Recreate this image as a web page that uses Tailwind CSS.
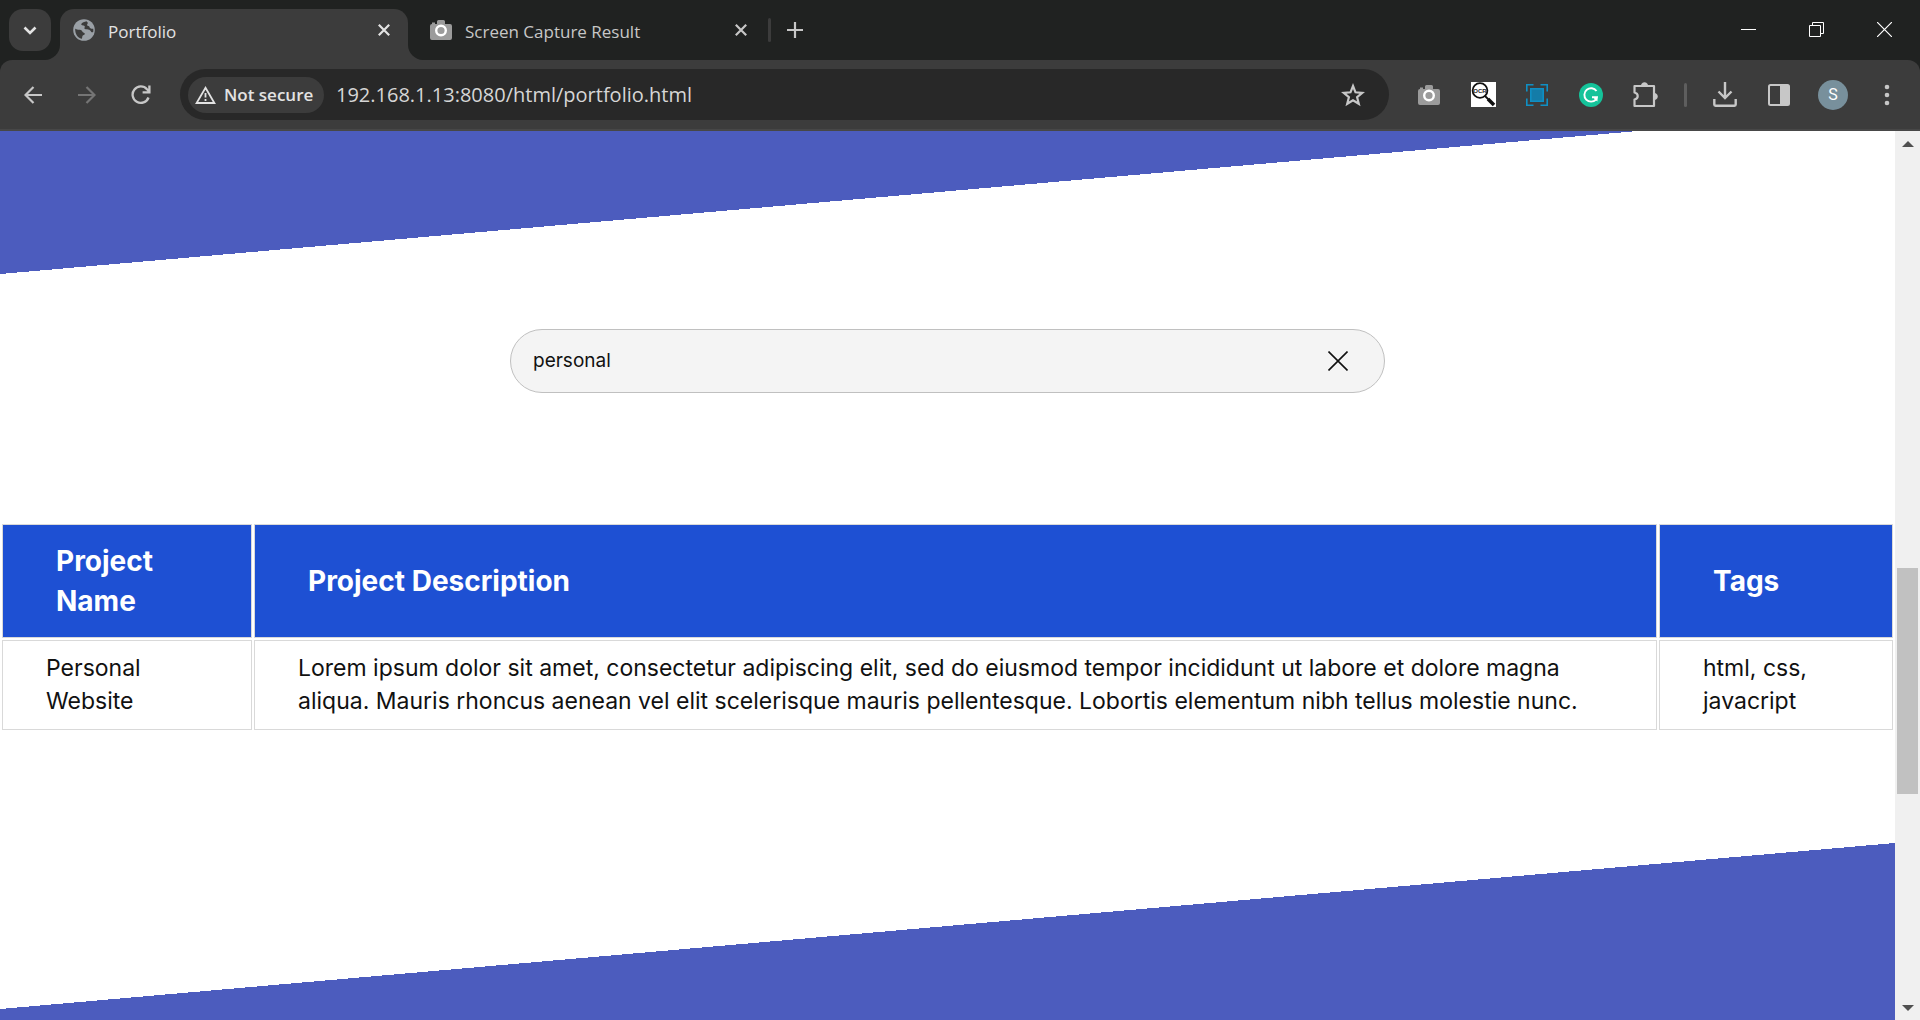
<!DOCTYPE html>
<html lang="en">
<head>
<meta charset="utf-8">
<meta name="viewport" content="width=device-width, initial-scale=1">
<title>Portfolio</title>
<script src="https://cdn.jsdelivr.net/npm/@tailwindcss/browser@4"></script>
</head>
<body class="flex min-h-screen flex-col bg-[#202221] font-['Open_Sans',sans-serif]">

<!-- Tab strip -->
<header class="flex h-[60px] shrink-0 items-start pt-[9px] pr-[2px] pl-[9px] text-[#e3e3e3]">
  <button aria-label="Search tabs" class="flex h-[42px] w-[42px] items-center justify-center rounded-[14px] bg-[#3c3c3c]">
    <svg width="14" height="9" viewBox="0 0 14 9" fill="none" stroke="currentColor" stroke-width="2.6"><path d="M1.5 1.5 7 7l5.500-5.500"/></svg>
  </button>
  <div class="relative ml-[9px] flex h-[51px] w-[348px] items-start rounded-t-[14px] bg-[#3c3c3c] pr-3 pl-[13px]">
    <svg class="absolute bottom-0 -left-[15px]" width="15" height="15" viewBox="0 0 15 15" fill="#3c3c3c"><path d="M15 0v15H0C8 15 15 8 15 0z"/></svg>
    <svg class="absolute -right-[15px] bottom-0" width="15" height="15" viewBox="0 0 15 15" fill="#3c3c3c"><path d="M0 0v15h15C7 15 0 8 0 0z"/></svg>
    <div class="flex h-[42px] w-full items-center">
      <svg width="22" height="22" viewBox="0 0 22 22"><circle cx="11" cy="11" r="10.800" fill="#9aa0a6"/><path d="M2.200 9.200c0 1.600 3.400 1.200 5.600 1.800 1.500.500 1.600 2.500 3 2.700 1.600.200 1.300 2.200-.6 2.500-1.400.300-.6 3.500-1.700 3.600C4.500 18.700 1.900 15 2.200 9.200zM13.500 2.200c-2 .5-4.600 1.200-5.200 2.700-.5 1.500 2.200 1.200 3.200 2.100 1 1-.9 2.300.5 3.100 2 1.100 4.200.1 5.200 1.300.9 1 1.200 2.500 3 1.600.2-.9.200-2.600 0-3.300-1.500.2-3.700-.2-3.700-1.700 0-1.300-2.300-.6-2.400-2 0-1.300 1-1.600.6-2.600z" fill="#3c3c3c"/></svg>
      <span class="ml-[13px] flex-1 pt-[3px] text-[17px]">Portfolio</span>
      <button aria-label="Close Portfolio tab" class="flex h-6 w-6 items-center justify-center"><svg width="12" height="12" viewBox="0 0 12 12" stroke="currentColor" stroke-width="2.200"><path d="m.8.8 10.400 10.400M11.200.8.8 11.200"/></svg></button>
    </div>
  </div>
  <div class="flex h-[42px] w-[360px] items-center pr-[15px] pl-[22px] text-[#c7c7c7]">
    <svg width="22" height="20" viewBox="0 0 22 20"><path d="M2 4V2.500h3V4l2-.1V1.500Q7 0 8.500 0h5Q15 0 15 1.500V4h5q2 0 2 2v12q0 2-2 2H2q-2 0-2-2V6q0-2 2-2z" fill="#9b9b9b"/><circle cx="11" cy="10.500" r="4.800" fill="#9b9b9b" stroke="#fff" stroke-width="2.400"/></svg>
    <span class="ml-[13px] flex-1 pt-[3px] text-[17px]">Screen Capture Result</span>
    <button aria-label="Close Screen Capture Result tab" class="flex h-6 w-6 items-center justify-center"><svg width="12" height="12" viewBox="0 0 12 12" stroke="currentColor" stroke-width="2.200"><path d="m.8.8 10.400 10.400M11.200.8.8 11.200"/></svg></button>
  </div>
  <div class="flex h-[42px] items-center">
    <span class="h-6 w-[3px] rounded bg-[#3c3c3c]"></span>
    <button aria-label="New tab" class="ml-3 flex h-6 w-6 items-center justify-center text-[#c7c7c7]"><svg width="16" height="16" viewBox="0 0 16 16" stroke="currentColor" stroke-width="2.200"><path d="M8 0v16M0 8h16"/></svg></button>
  </div>
  <div class="ml-auto flex h-10 text-white">
    <button aria-label="Minimize" class="flex w-[68px] items-center justify-center"><svg width="15" height="15" viewBox="0 0 15 15" stroke="currentColor"><path d="M0 7.500h15"/></svg></button>
    <button aria-label="Restore" class="flex w-[68px] items-center justify-center"><svg width="15" height="15" viewBox="0 0 15 15" fill="none" stroke="currentColor"><path d="M.5 3.500h11v11H.5zM3.500 3.500v-3h11v11h-3"/></svg></button>
    <button aria-label="Close window" class="flex w-[68px] items-center justify-center"><svg width="15" height="15" viewBox="0 0 15 15" stroke="currentColor" stroke-width="1.200"><path d="m0 0 15 15M15 0 0 15"/></svg></button>
  </div>
</header>

<!-- Toolbar -->
<nav class="flex h-[71px] shrink-0 items-center rounded-t-[12px] border-b-2 border-[#474747] bg-[#3c3c3c] px-[6px] text-[#c7c7c7]">
  <button aria-label="Back" class="flex w-[54px] justify-center"><svg width="18" height="18" viewBox="0 0 18 18" fill="none" stroke="currentColor" stroke-width="2.200"><path d="M18 9H2M9.500 1 1.500 9l8 8"/></svg></button>
  <button aria-label="Forward" class="flex w-[54px] justify-center text-[#757575]"><svg width="18" height="18" viewBox="0 0 18 18" fill="none" stroke="currentColor" stroke-width="2.200"><path d="M0 9h16M8.500 1l8 8-8 8"/></svg></button>
  <button aria-label="Reload" class="flex w-[54px] justify-center"><svg width="20" height="20" viewBox="0 0 20 20" fill="none" stroke="currentColor" stroke-width="2.300"><path d="M17.500 12.500A8.200 8.200 0 1 1 16 4.300l2 2M18.400.5v6.800h-6.800"/></svg></button>
  <div class="ml-3 flex h-[51px] min-w-0 flex-1 items-center rounded-full bg-[#282828] pr-6 pl-2">
    <button class="flex h-9 w-[136px] items-center gap-2 rounded-full bg-[#3c3c3c] pl-[7px] text-[17px] font-semibold whitespace-nowrap text-[#e3e3e3]">
      <svg class="shrink-0" width="21" height="18" viewBox="0 0 21 18" fill="none" stroke="currentColor" stroke-width="1.800"><path d="M10.500 1.800 19.400 17H1.600zM10.500 7v4.500M10.500 13v2"/></svg>
      Not secure
    </button>
    <input aria-label="Address" type="text" value="192.168.1.13:8080/html/portfolio.html" class="ml-3 min-w-0 flex-1 bg-transparent text-[20px] text-[#d6d6d6] outline-none">
    <button aria-label="Bookmark this page"><svg width="24" height="24" viewBox="0 0 24 24" fill="none" stroke="currentColor" stroke-width="2.200"><path d="m12 3 2.500 6.300 6.800.5-5.200 4.400 1.700 6.600-5.800-3.600-5.800 3.600 1.700-6.600-5.200-4.400 6.800-.5z"/></svg></button>
  </div>
  <div class="ml-[13px] flex shrink-0 items-center">
    <button aria-label="Screen capture" class="flex w-[54px] justify-center"><svg width="22" height="20" viewBox="0 0 22 20"><path d="M2 4V2.500h3V4l2-.1V1.500Q7 0 8.500 0h5Q15 0 15 1.500V4h5q2 0 2 2v12q0 2-2 2H2q-2 0-2-2V6q0-2 2-2z" fill="#9b9b9b"/><circle cx="11" cy="10.500" r="4.800" fill="#9b9b9b" stroke="#fff" stroke-width="2.400"/></svg></button>
    <button aria-label="OCR" class="flex w-[54px] justify-center"><svg width="25" height="25" viewBox="0 0 25 25"><path fill="#fff" d="M0 0h25v25H0z"/><circle cx="9" cy="8.500" r="7.400" fill="#fff" stroke="#111" stroke-width="1.800"/><path d="m14 14 3.500 3.500" stroke="#111" stroke-width="1.800"/><path d="m17 17 6 6" stroke="#111" stroke-width="3.600"/><text x="9" y="11" text-anchor="middle" font-size="6" font-weight="700" fill="#222" font-family="Liberation Sans, sans-serif">OCR</text></svg></button>
    <button aria-label="Capture area" class="flex w-[54px] justify-center"><svg width="22" height="22" viewBox="0 0 22 22" fill="none" stroke="#0f8fc4" stroke-width="1.600"><path d="M.8 7.500V.8h6.700M14.500.8h6.700v6.700M21.200 14.500v6.700h-6.700M7.500 21.200H.8v-6.700"/><path d="M4.800 4.800h12.400v12.400H4.800z" fill="#147ca8"/></svg></button>
    <button aria-label="Grammarly" class="flex w-[54px] justify-center"><svg width="24" height="24" viewBox="0 0 24 24" fill="none"><circle cx="12" cy="12" r="12" fill="#15c39a"/><path d="M17.500 8A6.700 6.700 0 1 0 17 16.500l.7-2.200H13" stroke="#fff" stroke-width="1.900"/><path d="m18.700 13.500-.3 5-3.600-3z" fill="#fff"/></svg></button>
    <button aria-label="Extensions" class="flex w-[54px] justify-center"><svg width="26" height="26" viewBox="0 0 26 26" fill="none" stroke="currentColor" stroke-width="2.200" stroke-linejoin="round"><path d="M2.500 4H22v20H2.500v-6.500c4.300-1 4.300-6 0-7z"/><path d="M9.500 3.500a3 2.800 0 0 1 6 0zM22.500 11.500a2.800 3 0 0 1 0 6z" fill="currentColor" stroke-width="1"/></svg></button>
    <span class="flex w-[26px] justify-center"><span class="h-6 w-[3px] rounded bg-[#5e5e5e]"></span></span>
    <button aria-label="Downloads" class="flex w-[54px] justify-center"><svg width="24" height="25" viewBox="0 0 24 25" fill="none" stroke="currentColor" stroke-width="2.400"><path d="M12 0v16M5.500 9.500 12 16l6.500-6.500M1.300 17v5.500q0 1.200 1.200 1.200h19q1.200 0 1.200-1.200V17"/></svg></button>
    <button aria-label="Side panel" class="flex w-[54px] justify-center"><svg width="22" height="22" viewBox="0 0 22 22" fill="none" stroke="currentColor" stroke-width="2"><rect x="1" y="1" width="20" height="20" rx="1.500"/><path d="M13 1h8v20h-8z" fill="currentColor" stroke="none"/><path d="M13 1v20"/></svg></button>
    <button aria-label="Profile" class="flex w-[54px] justify-center"><span class="flex h-[30px] w-[30px] items-center justify-center rounded-full bg-[#78909c] font-[Roboto,sans-serif] text-[16px] text-white">S</span></button>
    <button aria-label="Menu" class="flex w-[54px] justify-center"><svg width="6" height="22" viewBox="0 0 6 22" fill="currentColor"><circle cx="3" cy="3" r="2.300"/><circle cx="3" cy="11" r="2.300"/><circle cx="3" cy="19" r="2.300"/></svg></button>
  </div>
</nav>

<!-- Page viewport and its scrollbar -->
<div class="flex flex-1 bg-white">
  <main class="flex min-w-0 flex-1 flex-col font-[Inter,sans-serif] text-[#111]">
    <svg class="h-[143px] w-full shrink-0" viewBox="0 0 1895 143" preserveAspectRatio="none" shape-rendering="crispEdges" aria-hidden="true"><path d="M0 0h1638L0 143z" fill="#4c5cbe"/></svg>

    <form role="search" class="mx-auto mt-[55px] flex h-16 w-full max-w-[875px] items-center rounded-full border border-[#c0c0c0] bg-[#f4f4f4] pr-9 pl-[22px]">
      <input aria-label="Search projects" type="text" value="personal" class="min-w-0 flex-1 bg-transparent text-[19px] outline-none">
      <button type="button" aria-label="Clear search"><svg width="20" height="20" viewBox="0 0 20 20" stroke="currentColor" stroke-width="1.600"><path d="m.5.5 19 19M19.500.5l-19 19"/></svg></button>
    </form>

    <table class="mt-[129px] w-full table-fixed border-separate border-spacing-[2px] text-left text-[23px] leading-[33px]">
      <colgroup><col class="w-[250px]"><col><col class="w-[234px]"></colgroup>
      <thead>
        <tr class="bg-[#1e50d3] text-[28px] leading-10 text-white">
          <th class="border border-[#d9d9d9] px-[53px] py-4 font-bold">Project Name</th>
          <th class="border border-[#d9d9d9] px-[53px] py-4 font-bold">Project Description</th>
          <th class="border border-[#d9d9d9] px-[53px] py-4 font-bold">Tags</th>
        </tr>
      </thead>
      <tbody>
        <tr>
          <td class="border border-[#d9d9d9] px-[43px] py-[11px]">Personal Website</td>
          <td class="border border-[#d9d9d9] px-[43px] py-[11px]">Lorem ipsum dolor sit amet, consectetur adipiscing elit, sed do eiusmod tempor incididunt ut labore et dolore magna aliqua. Mauris rhoncus aenean vel elit scelerisque mauris pellentesque. Lobortis elementum nibh tellus molestie nunc.</td>
          <td class="border border-[#d9d9d9] px-[43px] py-[11px]">html, css, javacript</td>
        </tr>
      </tbody>
    </table>

    <svg class="mt-auto h-[177px] w-full shrink-0" viewBox="0 0 1895 177" preserveAspectRatio="none" shape-rendering="crispEdges" aria-hidden="true"><path d="M0 166 1895 0v177H0z" fill="#4c5cbe"/></svg>
  </main>
  <aside aria-hidden="true" class="flex w-[25px] shrink-0 flex-col items-center bg-[#f0f0f0] pt-[10px] pb-[9px]">
    <svg width="12" height="6" viewBox="0 0 12 6" fill="#505050"><path d="m6 0 6 6H0z"/></svg>
    <div class="mt-[421px] h-[226px] w-[21px] bg-[#c1c1c1]"></div>
    <svg class="mt-auto" width="12" height="6" viewBox="0 0 12 6" fill="#505050"><path d="M0 0h12L6 6z"/></svg>
  </aside>
</div>
</body>
</html>
